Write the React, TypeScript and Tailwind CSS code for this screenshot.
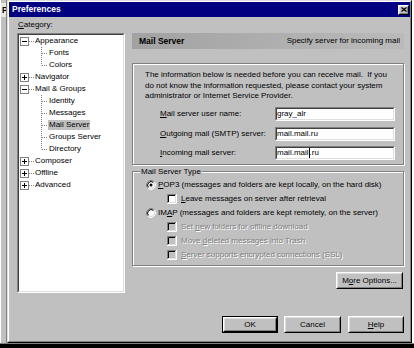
import type { ReactNode } from "react";

type TreeNode = { label: string; kind: "open" | "closed" | "child" | "last"; selected?: boolean };

const tree: TreeNode[] = [
  { label: "Appearance", kind: "open" },
  { label: "Fonts", kind: "child" },
  { label: "Colors", kind: "last" },
  { label: "Navigator", kind: "closed" },
  { label: "Mail & Groups", kind: "open" },
  { label: "Identity", kind: "child" },
  { label: "Messages", kind: "child" },
  { label: "Mail Server", kind: "child", selected: true },
  { label: "Groups Server", kind: "child" },
  { label: "Directory", kind: "last" },
  { label: "Composer", kind: "closed" },
  { label: "Offline", kind: "closed" },
  { label: "Advanced", kind: "closed" },
];

const TreeLines = ({ kind }: { kind: TreeNode["kind"] }) => {
  if (kind === "open" || kind === "closed") {
    return (
      <svg width="15" height="12" viewBox="0 0 15 12" className="shrink-0">
        <rect x="1.5" y="2.5" width="8" height="8" fill="#fff" stroke="#808080" />
        <path d="M3 6.5H8" stroke="#000" />
        {kind === "closed" && <path d="M5.5 4V9" stroke="#000" />}
        <path d="M10 6.5H15" stroke="#808080" strokeDasharray="1 1" />
      </svg>
    );
  }
  return (
    <svg width="29" height="12" viewBox="0 0 29 12" className="shrink-0">
      <path d={kind === "last" ? "M22.5 0V6.5" : "M22.5 0V12"} stroke="#808080" strokeDasharray="1 1" />
      <path d="M23 6.5H29" stroke="#808080" strokeDasharray="1 1" />
    </svg>
  );
};

const Button = ({ children, w, primary }: { children: ReactNode; w: string; primary?: boolean }) => {
  const face = (
    <div className="flex h-full w-full border border-t-white border-l-white border-r-black border-b-black">
      <div className="flex flex-1 items-center justify-center border border-t-[#dfdfdf] border-l-[#dfdfdf] border-r-[#808080] border-b-[#808080]">
        {children}
      </div>
    </div>
  );
  return <div className={`h-[17px] ${w} ${primary ? "border border-black" : ""}`}>{face}</div>;
};

const Field = ({ children }: { children: ReactNode }) => (
  <div className="h-[14px] w-[120px] border border-t-[#808080] border-l-[#808080] border-r-white border-b-white">
    <div className="flex h-full items-center border border-t-[#404040] border-l-[#404040] border-r-[#dfdfdf] border-b-[#dfdfdf] bg-white leading-none">
      {children}
    </div>
  </div>
);

const Radio = ({ checked }: { checked?: boolean }) => (
  <svg width="10" height="10" viewBox="0 0 10 10" className="shrink-0">
    <circle cx="5" cy="5" r="3.5" fill="#fff" />
    <path d="M1.82 8.18A4.5 4.5 0 0 1 8.18 1.82" stroke="#808080" fill="none" />
    <path d="M8.18 1.82A4.5 4.5 0 0 1 1.82 8.18" stroke="#fff" fill="none" />
    <path d="M2.53 7.47A3.5 3.5 0 0 1 7.47 2.53" stroke="#000" fill="none" />
    <path d="M7.47 2.53A3.5 3.5 0 0 1 2.53 7.47" stroke="#dfdfdf" fill="none" />
    {checked && <circle cx="5" cy="5" r="1.5" fill="#000" />}
  </svg>
);

const Check = ({ disabled }: { disabled?: boolean }) => (
  <svg width="10" height="10" viewBox="0 0 10 10" className="shrink-0">
    <rect x="2" y="2" width="6" height="6" fill={disabled ? "#c0c0c0" : "#fff"} />
    <path d="M0.5 10V0.5H10" stroke="#808080" fill="none" />
    <path d="M0 9.5H9.5V0" stroke="#fff" fill="none" />
    <path d="M1.5 9V1.5H9" stroke="#000" fill="none" />
    <path d="M1 8.5H8.5V1" stroke="#dfdfdf" fill="none" />
  </svg>
);

const U = ({ children }: { children: ReactNode }) => <span className="underline underline-offset-1">{children}</span>;

const disabledText = "text-[#808080] [text-shadow:1px_1px_0_#fff]";

export default function App() {
  return (
    <div className="flex h-[348px] w-[414px] flex-col overflow-hidden bg-white font-['Liberation_Sans',Arial,sans-serif] text-[8px] text-black">
      <div className="flex h-[343px]">
        {/* window behind the dialog */}
        <div className="flex w-[7px] flex-col border-l border-l-white border-r border-r-[#808080] bg-[#c0c0c0]">
          <div className="mt-[3px] h-[14px] overflow-hidden bg-[#e8e8e8] pl-[1px] text-[8.5px] font-bold leading-[14px] text-black">P</div>
        </div>

        {/* dialog */}
        <div className="flex w-[405px] border border-t-[#dfdfdf] border-l-[#dfdfdf] border-r-black border-b-black">
          <div className="flex flex-1 flex-col border border-t-white border-l-white border-r-[#808080] border-b-[#808080] bg-[#c0c0c0]">
            <div className="flex h-[15px] items-center bg-[#000080] pl-[3px] pr-[1px]">
              <span className="text-[8.5px] font-bold text-white">Preferences</span>
              <div className="ml-auto flex h-[10px] w-[11px] border border-t-white border-l-white border-r-black border-b-black bg-[#c0c0c0]">
                <div className="flex flex-1 items-center justify-center border border-t-[#dfdfdf] border-l-[#dfdfdf] border-r-[#808080] border-b-[#808080]">
                  <svg width="6" height="5" viewBox="0 0 6 5">
                    <path d="M0.5 0.5L5.5 4.5M5.5 0.5L0.5 4.5" stroke="#000" strokeWidth="1.3" />
                  </svg>
                </div>
              </div>
            </div>

            <div className="flex flex-1 flex-col">
              <div className="flex pt-[2px]">
                {/* category tree */}
                <div className="ml-[8px] flex w-[108px] flex-col">
                  <div className="h-[14px] pl-[1px] leading-[11px]">
                    <U>C</U>ategory:
                  </div>
                  <div className="h-[260px] border border-t-[#808080] border-l-[#808080] border-r-white border-b-white">
                    <div className="h-full border border-t-[#404040] border-l-[#404040] border-r-[#dfdfdf] border-b-[#dfdfdf] bg-white">
                      {tree.map((n) => (
                        <div key={n.label} className="flex h-[12px] items-center">
                          <TreeLines kind={n.kind} />
                          <span className={`px-[1px] leading-[10px] ${n.selected ? "bg-[#c0c0c0]" : ""}`}>{n.label}</span>
                        </div>
                      ))}
                    </div>
                  </div>
                </div>

                {/* right panel */}
                <div className="ml-[7px] mt-[14px] flex w-[272px] flex-col">
                  <div className="flex h-[16px] items-center bg-gradient-to-r from-[#a2a2a2] to-[#bababa] pl-[7px] pr-[4px]">
                    <span className="text-[8.5px] font-bold">Mail Server</span>
                    <span className="ml-auto">Specify server for incoming mail</span>
                  </div>

                  <div className="mt-[14px] flex h-[102px] flex-col border border-[#808080] pl-[12px] pr-[7px] pt-[6px] shadow-[inset_1px_1px_0_#fff,1px_1px_0_#fff]">
                    <p className="leading-[10.5px]">
                      The information below is needed before you can receive mail.&nbsp; If you do not know the information requested, please contact your system administrator or Internet Service Provider.
                    </p>
                    <div className="mt-[5.5px] flex flex-col gap-[5.5px] pl-[15px]">
                      <div className="flex items-center">
                        <span className="w-[115px]">
                          <U>M</U>ail server user name:
                        </span>
                        <Field>gray_alr</Field>
                      </div>
                      <div className="flex items-center">
                        <span className="w-[115px]">
                          <U>O</U>utgoing mail (SMTP) server:
                        </span>
                        <Field>mail.mail.ru</Field>
                      </div>
                      <div className="flex items-center">
                        <span className="w-[115px]">
                          <U>I</U>ncoming mail server:
                        </span>
                        <Field>
                          mail.mail<span className="inline-block h-[10px] w-[1px] bg-black" />.ru
                        </Field>
                      </div>
                    </div>
                  </div>

                  <div className="mt-[6px] flex h-[95px] flex-col border border-[#808080] shadow-[inset_1px_1px_0_#fff,1px_1px_0_#fff]">
                    <span className="-mt-[6px] ml-[7px] w-fit bg-[#c0c0c0] px-[1px] leading-[11px]">Mail Server Type</span>
                    <div className="mt-[1px] flex flex-col">
                      <div className="flex h-[14px] items-center gap-[2px] pl-[13px]">
                        <Radio checked />
                        <span>
                          <U>P</U>OP3 (messages and folders are kept locally, on the hard disk)
                        </span>
                      </div>
                      <div className="flex h-[14px] items-center gap-[4px] pl-[34px]">
                        <Check />
                        <span>
                          <U>L</U>eave messages on server after retrieval
                        </span>
                      </div>
                      <div className="flex h-[14px] items-center gap-[2px] pl-[13px]">
                        <Radio />
                        <span>
                          IM<U>A</U>P (messages and folders are kept remotely, on the server)
                        </span>
                      </div>
                      <div className="flex h-[14px] items-center gap-[4px] pl-[34px]">
                        <Check disabled />
                        <span className={disabledText}>
                          Set <U>n</U>ew folders for offline download
                        </span>
                      </div>
                      <div className="flex h-[14px] items-center gap-[4px] pl-[34px]">
                        <Check disabled />
                        <span className={disabledText}>
                          Move <U>d</U>eleted messages into Trash
                        </span>
                      </div>
                      <div className="flex h-[14px] items-center gap-[4px] pl-[34px]">
                        <Check disabled />
                        <span className={disabledText}>
                          <U>S</U>erver supports encrypted connections (SSL)
                        </span>
                      </div>
                    </div>
                  </div>

                  <div className="mt-[6px] flex justify-end pr-[1px]">
                    <Button w="w-[67px]">
                      M<U>o</U>re Options...
                    </Button>
                  </div>
                </div>
              </div>

              <div className="mt-[23px] flex justify-end gap-[6px] pr-[6px]">
                <Button w="w-[56px]" primary>
                  OK
                </Button>
                <Button w="w-[57px]">Cancel</Button>
                <div className="ml-[1px]">
                  <Button w="w-[56px]">
                    <U>H</U>elp
                  </Button>
                </div>
              </div>
            </div>
          </div>
        </div>
        <div className="flex-1 bg-white" />
      </div>
      <div className="flex-1 border-t border-t-[#808080] bg-black" />
    </div>
  );
}
